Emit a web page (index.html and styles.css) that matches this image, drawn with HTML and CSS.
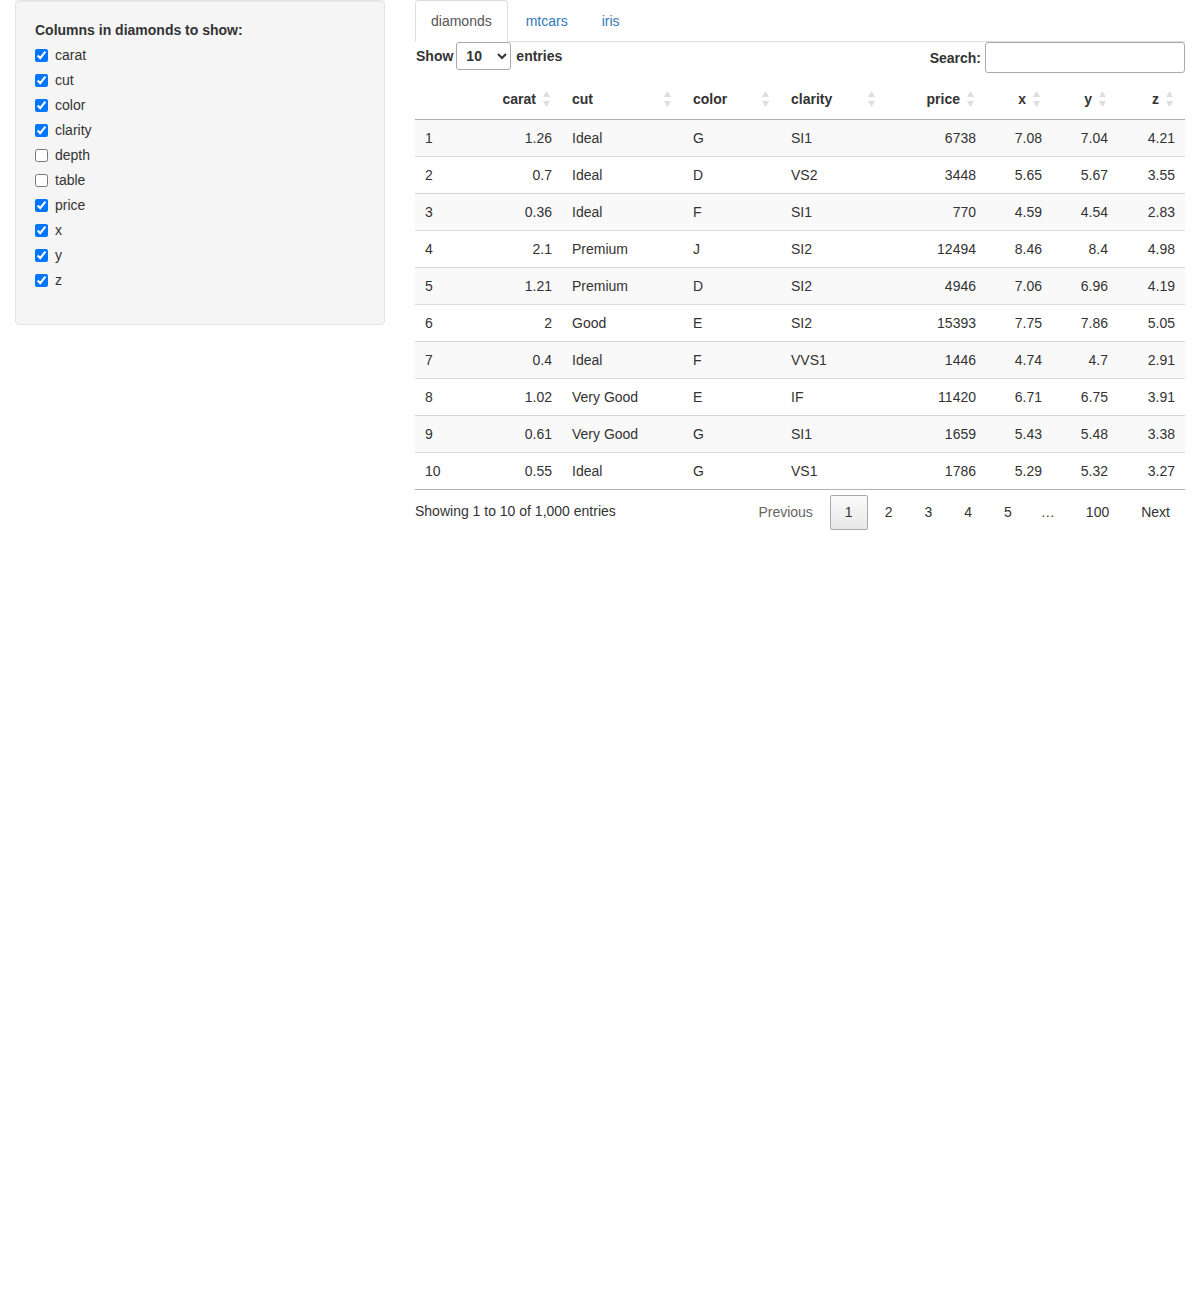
FILE: index.html
```html
<!DOCTYPE html>
<html>
<head>
<meta charset="utf-8">
<title>Shiny DT</title>
<link rel="stylesheet" href="styles.css">
</head>
<body>
<div class="page">
  <div class="side-col">
    <div class="well">
      <div class="group-label">Columns in diamonds to show:</div>
      <div class="opts">
        <label class="cb"><input type="checkbox" checked><span>carat</span></label>
        <label class="cb"><input type="checkbox" checked><span>cut</span></label>
        <label class="cb"><input type="checkbox" checked><span>color</span></label>
        <label class="cb"><input type="checkbox" checked><span>clarity</span></label>
        <label class="cb"><input type="checkbox"><span>depth</span></label>
        <label class="cb"><input type="checkbox"><span>table</span></label>
        <label class="cb"><input type="checkbox" checked><span>price</span></label>
        <label class="cb"><input type="checkbox" checked><span>x</span></label>
        <label class="cb"><input type="checkbox" checked><span>y</span></label>
        <label class="cb"><input type="checkbox" checked><span>z</span></label>
      </div>
    </div>
  </div>
  <div class="main-col">
    <ul class="tabs">
      <li class="tab active"><a>diamonds</a></li>
      <li class="tab"><a>mtcars</a></li>
      <li class="tab"><a>iris</a></li>
    </ul>
    <div class="dt">
      <div class="dt-top">
        <label class="len"><span>Show</span><select class="len-select"><option>10</option><option>25</option><option>50</option><option>100</option></select><span>entries</span></label>
        <label class="filter">Search:<input class="search" type="text"></label>
      </div>
      <table class="grid">
        <colgroup>
          <col class="w-rn"><col class="w-carat"><col class="w-cut"><col class="w-color"><col class="w-clarity"><col class="w-price"><col class="w-x"><col class="w-y"><col class="w-z">
        </colgroup>
        <thead>
          <tr>
            <th></th>
            <th><div class="hd"><span>carat</span><svg class="sort" viewBox="0 0 7 16"><polygon points="0,6 3.5,0 7,6"/><polygon points="0,10 7,10 3.5,16"/></svg></div></th>
            <th><div class="hd sp"><span>cut</span><svg class="sort" viewBox="0 0 7 16"><polygon points="0,6 3.5,0 7,6"/><polygon points="0,10 7,10 3.5,16"/></svg></div></th>
            <th><div class="hd sp"><span>color</span><svg class="sort" viewBox="0 0 7 16"><polygon points="0,6 3.5,0 7,6"/><polygon points="0,10 7,10 3.5,16"/></svg></div></th>
            <th><div class="hd sp"><span>clarity</span><svg class="sort" viewBox="0 0 7 16"><polygon points="0,6 3.5,0 7,6"/><polygon points="0,10 7,10 3.5,16"/></svg></div></th>
            <th><div class="hd"><span>price</span><svg class="sort" viewBox="0 0 7 16"><polygon points="0,6 3.5,0 7,6"/><polygon points="0,10 7,10 3.5,16"/></svg></div></th>
            <th><div class="hd"><span>x</span><svg class="sort" viewBox="0 0 7 16"><polygon points="0,6 3.5,0 7,6"/><polygon points="0,10 7,10 3.5,16"/></svg></div></th>
            <th><div class="hd"><span>y</span><svg class="sort" viewBox="0 0 7 16"><polygon points="0,6 3.5,0 7,6"/><polygon points="0,10 7,10 3.5,16"/></svg></div></th>
            <th><div class="hd"><span>z</span><svg class="sort" viewBox="0 0 7 16"><polygon points="0,6 3.5,0 7,6"/><polygon points="0,10 7,10 3.5,16"/></svg></div></th>
          </tr>
        </thead>
        <tbody>
          <tr class="odd"><td>1</td><td class="r">1.26</td><td>Ideal</td><td>G</td><td>SI1</td><td class="r">6738</td><td class="r">7.08</td><td class="r">7.04</td><td class="r">4.21</td></tr>
          <tr><td>2</td><td class="r">0.7</td><td>Ideal</td><td>D</td><td>VS2</td><td class="r">3448</td><td class="r">5.65</td><td class="r">5.67</td><td class="r">3.55</td></tr>
          <tr class="odd"><td>3</td><td class="r">0.36</td><td>Ideal</td><td>F</td><td>SI1</td><td class="r">770</td><td class="r">4.59</td><td class="r">4.54</td><td class="r">2.83</td></tr>
          <tr><td>4</td><td class="r">2.1</td><td>Premium</td><td>J</td><td>SI2</td><td class="r">12494</td><td class="r">8.46</td><td class="r">8.4</td><td class="r">4.98</td></tr>
          <tr class="odd"><td>5</td><td class="r">1.21</td><td>Premium</td><td>D</td><td>SI2</td><td class="r">4946</td><td class="r">7.06</td><td class="r">6.96</td><td class="r">4.19</td></tr>
          <tr><td>6</td><td class="r">2</td><td>Good</td><td>E</td><td>SI2</td><td class="r">15393</td><td class="r">7.75</td><td class="r">7.86</td><td class="r">5.05</td></tr>
          <tr class="odd"><td>7</td><td class="r">0.4</td><td>Ideal</td><td>F</td><td>VVS1</td><td class="r">1446</td><td class="r">4.74</td><td class="r">4.7</td><td class="r">2.91</td></tr>
          <tr><td>8</td><td class="r">1.02</td><td>Very Good</td><td>E</td><td>IF</td><td class="r">11420</td><td class="r">6.71</td><td class="r">6.75</td><td class="r">3.91</td></tr>
          <tr class="odd"><td>9</td><td class="r">0.61</td><td>Very Good</td><td>G</td><td>SI1</td><td class="r">1659</td><td class="r">5.43</td><td class="r">5.48</td><td class="r">3.38</td></tr>
          <tr><td>10</td><td class="r">0.55</td><td>Ideal</td><td>G</td><td>VS1</td><td class="r">1786</td><td class="r">5.29</td><td class="r">5.32</td><td class="r">3.27</td></tr>
        </tbody>
      </table>
      <div class="dt-bottom">
        <div class="info">Showing 1 to 10 of 1,000 entries</div>
        <div class="paginate">
          <a class="pbtn disabled">Previous</a>
          <a class="pbtn current">1</a>
          <a class="pbtn">2</a>
          <a class="pbtn">3</a>
          <a class="pbtn">4</a>
          <a class="pbtn">5</a>
          <span class="ellipsis">…</span>
          <a class="pbtn">100</a>
          <a class="pbtn">Next</a>
        </div>
      </div>
    </div>
  </div>
</div>
</body>
</html>
```

FILE: styles.css
```css
* { box-sizing: border-box; }

html, body {
  margin: 0;
  padding: 0;
  background: #fff;
}

body {
  font-family: "Liberation Sans", Arial, Helvetica, sans-serif;
  font-size: 14px;
  line-height: 20px;
  color: #333;
}

.page {
  display: grid;
  grid-template-columns: 400px 800px;
  width: 1200px;
}

.side-col, .main-col {
  padding: 0 15px;
}

/* sidebar well */
.well {
  background: #f5f5f5;
  border: 1px solid #e3e3e3;
  border-radius: 4px;
  box-shadow: inset 0 1px 1px rgba(0, 0, 0, 0.05);
  padding: 19px 19px 34px;
}

.group-label {
  font-weight: bold;
  margin-bottom: 5px;
}

.opts {
  display: flex;
  flex-direction: column;
  gap: 5px;
}

.cb {
  display: flex;
  align-items: flex-start;
  height: 20px;
  font-weight: normal;
}

.cb input {
  width: 13px;
  height: 13px;
  margin: 4px 7px 0 0;
  flex: none;
}

/* tabs */
.tabs {
  list-style: none;
  margin: 0;
  padding: 0;
  display: flex;
  border-bottom: 1px solid #ddd;
}

.tab {
  margin-bottom: -1px;
}

.tab a {
  display: block;
  margin-right: 2px;
  padding: 10px 15px;
  line-height: 20px;
  color: #337ab7;
  border: 1px solid transparent;
  border-radius: 4px 4px 0 0;
}

.tab.active a {
  color: #555;
  background: #fff;
  border-color: #ddd #ddd transparent;
}

/* datatable */
.dt-top {
  display: flex;
  justify-content: space-between;
  align-items: flex-start;
  height: 31px;
}

.len, .filter {
  display: flex;
  align-items: center;
  font-weight: bold;
  white-space: nowrap;
}

.len {
  height: 28px;
  padding-left: 1px;
}

.filter {
  height: 31px;
}

.len-select {
  font: inherit;
  color: inherit;
  width: 55px;
  height: 28px;
  padding: 3px 4px 3px 5px;
  border: 1px solid #aaa;
  border-radius: 3px;
  background-color: #fff;
  margin: 0 5px 0 3px;
}

.search {
  font: inherit;
  font-weight: normal;
  width: 200px;
  height: 31px;
  margin: 0 0 0 4px;
  padding: 5px;
  border: 1px solid #aaa;
  border-radius: 3px;
  background: #fff;
}

.grid {
  width: 770px;
  margin-top: 5px;
  border-collapse: collapse;
  table-layout: fixed;
  border-bottom: 1px solid rgba(0, 0, 0, 0.3);
}

.w-rn { width: 66px; }
.w-carat { width: 81px; }
.w-cut { width: 121px; }
.w-color { width: 98px; }
.w-clarity { width: 106px; }
.w-price { width: 99px; }
.w-x { width: 66px; }
.w-y { width: 66px; }
.w-z { width: 67px; }

.grid th {
  padding: 11px 10px 9px 10px;
  font-weight: bold;
  text-align: left;
  border-bottom: 1px solid rgba(0, 0, 0, 0.3);
  height: 41px;
}

.hd {
  display: flex;
  align-items: center;
  justify-content: flex-end;
  padding-right: 2px;
}

.hd.sp {
  justify-content: space-between;
}

.sort {
  display: block;
  flex: none;
  width: 7px;
  height: 16px;
  margin-left: 7px;
  fill: #dedede;
}

.grid td {
  padding: 8px 10px;
  height: 36px;
  border-top: 1px solid rgba(0, 0, 0, 0.15);
  white-space: nowrap;
}

.grid tbody tr:first-child td {
  border-top: none;
}

.grid tr.odd td {
  background: #f9f9f9;
}

.grid td.r {
  text-align: right;
}

.dt-bottom {
  display: flex;
  justify-content: space-between;
  align-items: flex-start;
}

.info {
  padding-top: 11.5px;
}

.paginate {
  display: flex;
  align-items: center;
  padding-top: 5px;
}

.pbtn {
  display: block;
  margin-left: 2px;
  min-width: 21px;
  text-align: center;
  border: 1px solid transparent;
  border-radius: 2px;
  color: #333;
  line-height: 20px;
  height: 35px;
  padding: 6px 14px 7px;
}

.pbtn.disabled {
  color: #666;
}

.pbtn.current {
  border: 1px solid #aaa;
  background: linear-gradient(to bottom, #fbfbfb 0%, #e7e7e7 100%);
}

.ellipsis {
  display: block;
  padding: 0 14px;
  color: #333;
}
```
